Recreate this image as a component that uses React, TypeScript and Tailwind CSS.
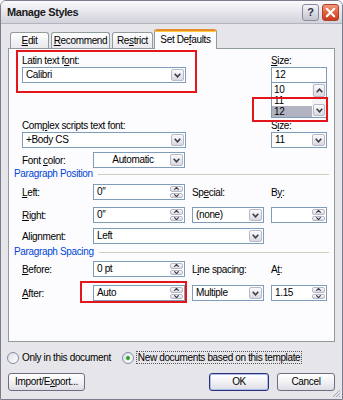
import React from "react";

const ui = "font-['Liberation_Sans',Arial,sans-serif] text-[10px] tracking-[-0.35px] text-black";

function Chevron({ up = false }: { up?: boolean }) {
	return (
		<svg width="7" height="5" viewBox="0 0 7 5" className="block">
			<path
				d={up ? "M0.7 4.2 L3.5 1.2 L6.3 4.2" : "M0.7 0.8 L3.5 3.8 L6.3 0.8"}
				fill="none"
				stroke="#3c3c4a"
				strokeWidth="1.6"
			/>
		</svg>
	);
}

function SmallArrow({ up = false }: { up?: boolean }) {
	return (
		<svg width="5" height="3" viewBox="0 0 5 3" className="block">
			<path d={up ? "M0.3 2.7 L2.5 0.4 L4.7 2.7" : "M0.3 0.3 L2.5 2.6 L4.7 0.3"} fill="none" stroke="#3c3c4a" strokeWidth="1.2" />
		</svg>
	);
}

function DropButton({ up = false, className = "" }: { up?: boolean; className?: string }) {
	return (
		<div
			className={`w-[13px] border border-[#b6b9c8] rounded-[2px] bg-linear-to-b from-[#fbfbfc] to-[#d8d9e2] flex items-center justify-center ${className}`}
		>
			<Chevron up={up} />
		</div>
	);
}

function Combo({ text, width, center = false }: { text: string; width: string; center?: boolean }) {
	return (
		<div className={`${width} h-[16px] border border-[#7f9db9] bg-white flex items-stretch`}>
			<span className={`flex-1 leading-[14px] pl-[3px] ${center ? "text-center" : ""}`}>{text}</span>
			<div className="p-px flex">
				<DropButton />
			</div>
		</div>
	);
}

function Spin({ text, width }: { text: string; width: string }) {
	return (
		<div className={`${width} h-[16px] border border-[#7f9db9] bg-white flex items-stretch`}>
			<span className="flex-1 leading-[14px] pl-[3px]">{text}</span>
			<div className="p-px flex flex-col gap-px w-[15px]">
				<div className="flex-1 border border-[#b6b9c8] rounded-[2px] bg-linear-to-b from-[#fbfbfc] to-[#d8d9e2] flex items-center justify-center">
					<SmallArrow up />
				</div>
				<div className="flex-1 border border-[#b6b9c8] rounded-[2px] bg-linear-to-b from-[#fbfbfc] to-[#d8d9e2] flex items-center justify-center">
					<SmallArrow />
				</div>
			</div>
		</div>
	);
}

function U({ children }: { children: React.ReactNode }) {
	return <span className="underline underline-offset-[1px]">{children}</span>;
}

function GroupHeader({ title }: { title: string }) {
	return (
		<div className="flex items-center h-[12px]">
			<span className="text-[#0046d5] leading-[12px]">{title}</span>
			<div className="flex-1 h-px bg-[#d0d0bf] ml-[5px]" />
		</div>
	);
}

function Tab({ label, width, active = false }: { label: React.ReactNode; width: string; active?: boolean }) {
	if (active) {
		return (
			<div className={`${width} h-[20px] -mb-px relative z-10 flex flex-col border-x border-[#919b9c] bg-[#fcfcfe] rounded-t-[3px] overflow-hidden`}>
				<div className="h-[2px] bg-[#e68b2c]" />
				<div className="h-px bg-[#ffc73c]" />
				<div className="flex-1 flex items-center justify-center leading-[12px] pb-[2px]">{label}</div>
			</div>
		);
	}
	return (
		<div
			className={`${width} h-[16px] border border-b-0 border-[#919b9c] rounded-t-[3px] bg-linear-to-b from-[#ffffff] to-[#e8e8ee] flex items-center justify-center leading-[12px]`}
		>
			{label}
		</div>
	);
}

function XPButton({ children, width, isDefault = false }: { children: React.ReactNode; width: string; isDefault?: boolean }) {
	return (
		<div
			className={`${width} h-[18px] rounded-[3px] border ${
				isDefault ? "border-[#30307a] shadow-[inset_0_0_0_1px_#a8c0ee]" : "border-[#6e6e80]"
			} bg-linear-to-b from-[#ffffff] via-[#f2f2f5] to-[#dcdce4] flex items-center justify-center leading-[12px]`}
		>
			{children}
		</div>
	);
}

function Radio({ checked = false }: { checked?: boolean }) {
	return (
		<div className="w-[12px] h-[12px] rounded-full border border-[#7f8ea4] bg-linear-to-br from-[#dcdce4] to-[#ffffff] flex items-center justify-center">
			{checked && <div className="w-[4px] h-[4px] rounded-full bg-[#24a224]" />}
		</div>
	);
}

export default function App() {
	return (
		<div className={`w-[343px] h-[400px] ${ui} flex flex-col border border-[#7c7c8c] rounded-t-[6px] overflow-hidden bg-[#e6e6ea]`}>
			{/* title bar */}
			<div className="h-[23px] flex items-center justify-between pl-[6px] pr-[3px] bg-linear-to-b from-[#fafafc] via-[#e6e6ec] to-[#d2d2da] border-b border-[#b4b4c0]">
				<span className="font-bold text-[11px] tracking-[-0.4px] text-[#1a1a1a]">Manage Styles</span>
				<div className="flex items-center gap-[3px]">
					<div className="w-[17px] h-[17px] rounded-[3px] border border-[#8a8a9c] bg-linear-to-b from-[#f4f4f8] to-[#c4c4d0] flex items-center justify-center text-[11px] font-bold text-[#30304a]">
						?
					</div>
					<div className="w-[17px] h-[17px] rounded-[3px] border border-[#b0402a] bg-linear-to-b from-[#f09a7e] via-[#e2603e] to-[#c8391e] flex items-center justify-center">
						<svg width="11" height="11" viewBox="0 0 11 11">
							<path d="M1.8 1.8 L9.2 9.2 M9.2 1.8 L1.8 9.2" stroke="#ffffff" strokeWidth="2.2" strokeLinecap="round" />
						</svg>
					</div>
				</div>
			</div>

			{/* body */}
			<div className="flex-1 flex flex-col px-[7px] pt-[5px] relative">
				{/* tabs */}
				<div className="flex items-end h-[19px] pl-[2px]">
					<Tab width="w-[39px]" label={<span><U>E</U>dit</span>} />
					<div className="w-[2px]" />
					<Tab width="w-[59px]" label={<span><U>R</U>ecommend</span>} />
					<div className="w-[2px]" />
					<Tab width="w-[41px]" label={<span>Re<U>s</U>trict</span>} />
					<div className="w-px" />
					<Tab width="w-[63px]" active label={<span>Set De<U>f</U>aults</span>} />
				</div>

				{/* panel */}
				<div className="h-[294px] border border-[#919b9c] bg-[#fcfcfe] relative pl-[5px] pr-[5px] pt-[5px] flex flex-col">
					<div className="ml-[8px] grid grid-cols-[164px_56px] gap-x-[85px] grid-rows-[13px_16px_35px_14px_16px]">
						<span className="leading-[13px]">Latin text f<U>o</U>nt:</span>
						<span className="leading-[13px]"><U>S</U>ize:</span>
						<Combo text="Calibri" width="w-[164px]" />
						<div className="h-[16px] border border-[#7f9db9] bg-white leading-[14px] pl-[3px]">12</div>
						<div />
						<div className="h-[35px] border border-t-0 border-[#7f9db9] bg-white flex">
							<div className="flex-1 flex flex-col pt-px">
								<span className="h-[11px] leading-[11px] pl-[2px]">10</span>
								<span className="h-[11px] leading-[11px] pl-[2px]">11</span>
								<span className="h-[11px] leading-[11px] pl-[2px] bg-[#b1b3c0]">12</span>
							</div>
							<div className="w-[14px] flex flex-col p-px bg-[#f4f4f6]">
								<DropButton up className="h-[13px] w-full" />
								<div className="flex-1" />
								<DropButton className="h-[12px] w-full" />
							</div>
						</div>
						<span className="leading-[14px] pt-px">Com<U>p</U>lex scripts text font:</span>
						<span className="leading-[14px] pt-px">S<U>i</U>ze:</span>
						<Combo text="+Body CS" width="w-[164px]" />
						<Combo text="11" width="w-[56px]" />
					</div>

					<div className="ml-[8px] mt-[4px] flex items-center h-[16px]">
						<span className="w-[71px]">Font <U>c</U>olor:</span>
						<Combo text="Automatic" width="w-[92px]" center />
					</div>

					<div className="mt-[0px]">
						<GroupHeader title="Paragraph Position" />
					</div>

					<div className="ml-[8px] mt-[4px] flex items-center h-[16px]">
						<span className="w-[71px]"><U>L</U>eft:</span>
						<Spin text={"0\u2033"} width="w-[92px]" />
						<span className="w-[72px] ml-[7px]">Sp<U>e</U>cial:</span>
						<span className="w-[56px] ml-[7px]">B<U>y</U>:</span>
					</div>

					<div className="ml-[8px] mt-[7px] flex items-center h-[16px]">
						<span className="w-[71px]"><U>R</U>ight:</span>
						<Spin text={"0\u2033"} width="w-[92px]" />
						<div className="ml-[7px]">
							<Combo text="(none)" width="w-[72px]" />
						</div>
						<div className="ml-[7px]">
							<Spin text="" width="w-[56px]" />
						</div>
					</div>

					<div className="ml-[8px] mt-[5px] flex items-center h-[16px]">
						<span className="w-[71px]">Ali<U>g</U>nment:</span>
						<Combo text="Left" width="w-[171px]" />
					</div>

					<div className="mt-[2px]">
						<GroupHeader title="Paragraph Spacing" />
					</div>

					<div className="ml-[8px] mt-[3px] flex items-center h-[16px]">
						<span className="w-[71px]"><U>B</U>efore:</span>
						<Spin text="0 pt" width="w-[92px]" />
						<span className="w-[72px] ml-[7px]">L<U>i</U>ne spacing:</span>
						<span className="w-[56px] ml-[7px]">A<U>t</U>:</span>
					</div>

					<div className="ml-[8px] mt-[8px] flex items-center h-[16px]">
						<span className="w-[71px]"><U>A</U>fter:</span>
						<Spin text="Auto" width="w-[92px]" />
						<div className="ml-[7px]">
							<Combo text="Multiple" width="w-[72px]" />
						</div>
						<div className="ml-[7px]">
							<Spin text="1.15" width="w-[56px]" />
						</div>
					</div>

					{/* red annotation boxes */}
					<div className="absolute left-[7px] top-[1px] w-[181px] h-[43px] border-2 border-[#e4161b]" />
					<div className="absolute left-[243px] top-[48px] w-[76px] h-[25px] border-2 border-[#e4161b]" />
					<div className="absolute left-[71px] top-[232px] w-[107px] h-[22px] border-2 border-[#e4161b]" />
				</div>

				{/* scope radios */}
				<div className="mt-[9px] h-[13px] flex items-center">
					<div className="ml-[-1px]">
						<Radio />
					</div>
					<span className="ml-[3px]">Only in this document</span>
					<div className="ml-[11px]">
						<Radio checked />
					</div>
					<span className="ml-[2px] px-px border border-dotted border-[#555] leading-[11px]">New documents based on this template</span>
				</div>

				{/* buttons */}
				<div className="mt-[9px] flex items-center">
					<XPButton width="w-[77px]">Import/E<U>x</U>port...</XPButton>
					<div className="flex-1" />
					<XPButton width="w-[60px]" isDefault>OK</XPButton>
					<div className="w-[8px]" />
					<XPButton width="w-[58px]">Cancel</XPButton>
				</div>

				{/* resize grip */}
				<svg width="10" height="10" viewBox="0 0 10 10" className="absolute right-[1px] bottom-[1px]">
					<path d="M9 2 L2 9 M9 5 L5 9 M9 8 L8 9" stroke="#a0a0ac" strokeWidth="1" />
				</svg>
			</div>
		</div>
	);
}
